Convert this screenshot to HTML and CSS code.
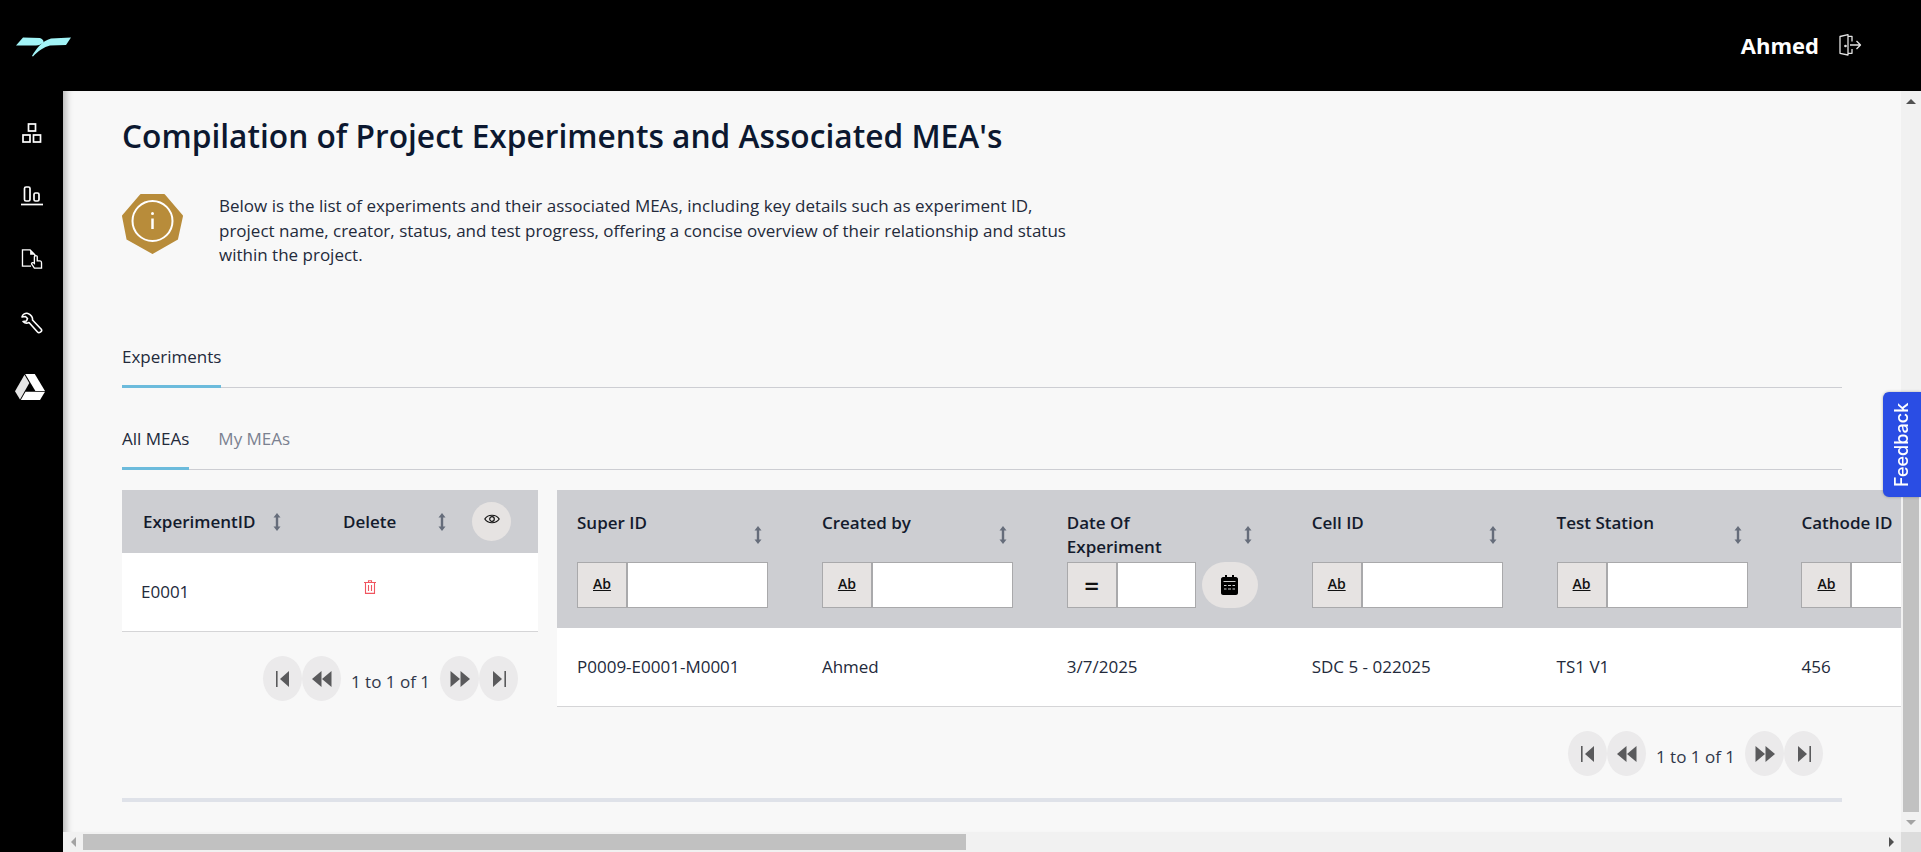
FILE: index.html
```html
<!DOCTYPE html>
<html>
<head>
  <title>Experiments</title>
  <link rel="stylesheet" href="styles.css">
</head>
<body>
<svg class="sprite" width="0" height="0">
  <symbol id="sort" viewBox="0 0 8 18"><path d="M4 0 7.5 4.5H5.2V13.5H7.5L4 18 .5 13.5H2.8V4.5H.5z"/></symbol>
  <symbol id="first" viewBox="0 0 14 16"><path d="M0 0H1.6V16H0zM13 0V16L4 8z"/></symbol>
  <symbol id="prev" viewBox="0 0 20 16"><path d="M9.5 0V16L0 8zM19.5 0V16L10 8z"/></symbol>
  <symbol id="next" viewBox="0 0 20 16"><path d="M.5 0V16L10 8zM10.5 0V16L20 8z"/></symbol>
  <symbol id="last" viewBox="0 0 14 16"><path d="M1 0V16L10 8zM12.4 0H14V16H12.4z"/></symbol>
</svg>

<div class="topbar">
  <svg class="logo" width="58" height="22" viewBox="0 0 58 22">
    <path d="M1 9.500 8 1.500 25 2C28 3 29 5 28.500 7 26 8 24 9.500 21 9.500z"/>
    <path d="M17 20C21 13 27 5 36 2.500L56 1.500 51 9 35 9.500C29 11 23 15 18 20.500z"/>
  </svg>
  <div class="user">
    <span class="username">Ahmed</span>
    <svg width="23" height="22" viewBox="0 0 23 22" fill="none" stroke="#e2e2e2" stroke-width="1.300" stroke-linejoin="round">
      <path d="M1 2.500 9 .7V21L1 19.300z"/>
      <path d="M9 2.300H13V7.500M13 15V19.300H9"/>
      <path d="M11 11H21.500M17.500 7 21.500 11 17.500 15"/>
      <circle cx="6.500" cy="12" r=".7" fill="#e2e2e2"/>
    </svg>
  </div>
</div>

<div class="layout">
  <div class="sidebar">
    <svg class="nav-icon" width="22" height="20" viewBox="0 0 22 20" fill="none" stroke="#fff" stroke-width="1.700">
      <rect x="7.500" y="1" width="7" height="7"/>
      <rect x="2" y="12" width="7" height="7"/>
      <rect x="12.500" y="12" width="7" height="7"/>
    </svg>
    <svg class="nav-icon" width="22" height="20" viewBox="0 0 22 20" fill="none" stroke="#fff" stroke-width="1.700">
      <rect x="3.500" y="1" width="5.500" height="14" rx="1.500"/>
      <rect x="13" y="7" width="5" height="8" rx="1.500"/>
      <path d="M0 18.500H22"/>
    </svg>
    <svg class="nav-icon" width="22" height="20" viewBox="0 0 22 21" fill="none" stroke="#fff" stroke-width="1.400">
      <path d="M10 18H1V1H9L14 6V8"/>
      <path d="M9 1.500V6H13.500z" fill="#fff" stroke="none"/>
      <path d="M13.500 8C13.500 6.500 16.500 6.500 16.500 8V12.500H19.500C20.500 12.500 21 13.500 21 14.500V20H13.500L10.500 15.500C10.500 14 12.500 14 13.500 15z"/>
    </svg>
    <svg class="nav-icon" width="22" height="22" viewBox="0 0 22 22" fill="none" stroke="#fff" stroke-width="1.600" stroke-linejoin="round">
      <path d="M7 1.500C4.500 .5 1.500 2.500 1 5L4.500 4.500 6.500 6.500 5.500 9 2 9.500C3.500 11 6 11.500 8 10.500L16.500 20C18 21.500 21.500 19.500 20.500 17.500L11.500 8C12 5.500 10 2.500 7 1.500z"/>
    </svg>
    <svg class="nav-icon nav-drive" width="30" height="26" viewBox="0 0 30 26" fill="#fff">
      <path d="M10.200 0H19.800L30 17H20.400z"/>
      <path d="M9.500 .8 14.300 9 5 25.500 0 17.200z" fill="#e4e4e4"/>
      <path d="M10.500 17.800H30L25 26H5.800z"/>
    </svg>
  </div>

  <div class="main">
    <div class="viewport">
      <h1 class="title">Compilation of Project Experiments and Associated MEA's</h1>

      <div class="intro">
        <svg class="intro-badge" width="61" height="60" viewBox="0 0 61 60">
          <path d="M19 1H42L60 22 55 45 30.500 59 5.500 45 1 22z" fill="#b88c3a" stroke="#b88c3a" stroke-width="2" stroke-linejoin="round"/>
          <circle cx="30.500" cy="27" r="20" fill="none" stroke="#fff" stroke-width="2"/>
          <circle cx="30.500" cy="19.500" r="1.500" fill="#fff"/>
          <path d="M30.500 24.500V35" stroke="#fff" stroke-width="2.500"/>
        </svg>
        <p class="intro-text">Below is the list of experiments and their associated MEAs, including key details such as experiment ID, project name, creator, status, and test progress, offering a concise overview of their relationship and status within the project.</p>
      </div>

      <div class="tabs tabs-outer">
        <div class="tab active">Experiments</div>
      </div>
      <div class="tabs tabs-inner">
        <div class="tab active">All MEAs</div>
        <div class="tab muted">My MEAs</div>
      </div>

      <div class="tables">
        <div class="left-side">
          <div class="left-table">
            <div class="left-head">
              <div class="left-col1"><b>ExperimentID</b><svg class="sort"><use href="#sort"/></svg></div>
              <div class="left-col2"><b>Delete</b><svg class="sort"><use href="#sort"/></svg></div>
              <div class="eye-btn">
                <svg width="16" height="12" viewBox="0 0 16 12" fill="none" stroke="#111" stroke-width="1.200">
                  <path d="M.8 6C4 1 12 1 15.200 6 12 11 4 11 .8 6z"/>
                  <circle cx="8" cy="6" r="2.300"/>
                </svg>
              </div>
            </div>
            <div class="left-row">
              <div class="left-col1">E0001</div>
              <div class="left-col2">
                <svg class="trash" width="12" height="14" viewBox="0 0 12 14" fill="none" stroke="#f0555f" stroke-width="1.100">
                  <path d="M0 2.500H12M4.500 2.500V.7H7.500V2.500M1.500 2.500V13.400H10.500V2.500M4.500 5V11M7.500 5V11"/>
                </svg>
              </div>
            </div>
          </div>
          <div class="pager">
            <div class="page-btn"><svg width="14" height="16"><use href="#first"/></svg></div>
            <div class="page-btn"><svg width="20" height="16"><use href="#prev"/></svg></div>
            <span class="page-text">1 to 1 of 1</span>
            <div class="page-btn"><svg width="20" height="16"><use href="#next"/></svg></div>
            <div class="page-btn"><svg width="14" height="16"><use href="#last"/></svg></div>
          </div>
        </div>

        <div class="right-side">
          <div class="right-table">
            <div class="right-head">
              <div class="col">
                <div class="col-title"><b>Super ID</b><svg class="sort"><use href="#sort"/></svg></div>
                <div class="filter"><div class="filter-btn ab">Ab</div><div class="filter-input"></div></div>
              </div>
              <div class="col">
                <div class="col-title"><b>Created by</b><svg class="sort"><use href="#sort"/></svg></div>
                <div class="filter"><div class="filter-btn ab">Ab</div><div class="filter-input"></div></div>
              </div>
              <div class="col">
                <div class="col-title"><b>Date Of Experiment</b><svg class="sort"><use href="#sort"/></svg></div>
                <div class="filter-date">
                  <div class="filter filter-short"><div class="filter-btn equals">=</div><div class="filter-input"></div></div>
                  <div class="date-btn">
                    <svg width="17" height="20" viewBox="0 0 17 20">
                      <path d="M4 0H6V2H11V0H13V2H15C16 2 17 3 17 4V18C17 19 16 20 15 20H2C1 20 0 19 0 18V4C0 3 1 2 2 2H4z"/>
                      <path d="M2.500 6.500H14.500M3 10.500H5.500M7 10.500H10M11.500 10.500H14M3 14H5.500M7 14H10M11.500 14H14" stroke="#cfcfcf" stroke-width="1.200"/>
                    </svg>
                  </div>
                </div>
              </div>
              <div class="col">
                <div class="col-title"><b>Cell ID</b><svg class="sort"><use href="#sort"/></svg></div>
                <div class="filter"><div class="filter-btn ab">Ab</div><div class="filter-input"></div></div>
              </div>
              <div class="col">
                <div class="col-title"><b>Test Station</b><svg class="sort"><use href="#sort"/></svg></div>
                <div class="filter"><div class="filter-btn ab">Ab</div><div class="filter-input"></div></div>
              </div>
              <div class="col">
                <div class="col-title"><b>Cathode ID</b><svg class="sort"><use href="#sort"/></svg></div>
                <div class="filter"><div class="filter-btn ab">Ab</div><div class="filter-input"></div></div>
              </div>
            </div>
            <div class="right-row">
              <div class="col">P0009-E0001-M0001</div>
              <div class="col">Ahmed</div>
              <div class="col">3/7/2025</div>
              <div class="col">SDC 5 - 022025</div>
              <div class="col">TS1 V1</div>
              <div class="col">456</div>
            </div>
          </div>
          <div class="pager pager-right">
            <div class="page-btn"><svg width="14" height="16"><use href="#first"/></svg></div>
            <div class="page-btn"><svg width="20" height="16"><use href="#prev"/></svg></div>
            <span class="page-text">1 to 1 of 1</span>
            <div class="page-btn"><svg width="20" height="16"><use href="#next"/></svg></div>
            <div class="page-btn"><svg width="14" height="16"><use href="#last"/></svg></div>
          </div>
        </div>
      </div>

      <div class="end-rule"></div>
    </div>

    <div class="vscroll">
      <div class="arrow arrow-up"></div>
      <div class="v-track"><div class="v-thumb"></div></div>
      <div class="arrow arrow-down"></div>
    </div>
    <div class="hscroll">
      <div class="arrow arrow-left"></div>
      <div class="h-track"><div class="h-thumb"></div></div>
      <div class="arrow arrow-right"></div>
    </div>
    <div class="corner"></div>
  </div>
</div>

<div class="feedback">Feedback</div>
</body>
</html>
```

FILE: styles.css
```css
* {
  box-sizing: border-box;
}

html, body {
  margin: 0;
  height: 100%;
  overflow: hidden;
}

body {
  font-family: "Open Sans", sans-serif;
  font-size: 17px;
  color: #232a3b;
  background: #000;
}

.sprite {
  display: none;
}

/* top bar */
.topbar {
  height: 91px;
  background: #000;
  display: flex;
  align-items: center;
  justify-content: space-between;
  padding: 2px 59px 0 15px;
}

.logo path {
  fill: #a2f4f7;
}

.user {
  display: flex;
  align-items: center;
  gap: 20px;
  margin-top: -4px;
}

.username {
  color: #fff;
  font-size: 22px;
  font-weight: 700;
}

/* sidebar */
.layout {
  display: flex;
  height: 761px;
}

.sidebar {
  width: 63px;
  flex: none;
  background: #000;
  display: flex;
  flex-direction: column;
  align-items: center;
  padding-top: 32px;
  gap: 43px;
}

.nav-icon {
  flex: none;
}

.nav-drive {
  margin: -3px 3px 0 0;
}

/* main area */
.main {
  flex: 1;
  min-width: 0;
  display: grid;
  grid-template-columns: 1fr 20px;
  grid-template-rows: 1fr 20px;
  background: #f8f8f8;
}

.viewport {
  overflow: hidden;
  padding: 24px 59px 0 59px;
  box-shadow: inset 9px 0 7px -6px rgba(0, 0, 0, 0.28);
}

.title {
  margin: 0 0 38px;
  font-size: 31.7px;
  line-height: 41px;
  font-weight: 600;
  color: #0c1830;
}

.intro {
  display: flex;
  gap: 36px;
  height: 152px;
}

.intro-badge {
  flex: none;
}

.intro-text {
  margin: 0;
  width: 860px;
  line-height: 24.5px;
}

/* tabs */
.tabs {
  display: flex;
  border-bottom: 1px solid #cdced3;
  gap: 29px;
}

.tab {
  padding: 0 0 16px;
  line-height: 22px;
  margin-bottom: -1px;
  border-bottom: 3px solid transparent;
}

.tab.active {
  border-bottom-color: #6cbbdc;
}

.tab.muted {
  color: #7b8190;
}

.tabs-outer {
  height: 42px;
}

.tabs-outer .tab {
  padding-bottom: 17px;
}

.tabs-inner {
  margin-top: 40px;
  height: 42px;
}

/* tables */
.tables {
  display: flex;
  gap: 19px;
  margin-top: 20px;
  margin-right: -59px;
}

.left-side {
  width: 416px;
  flex: none;
}

.left-head {
  height: 63px;
  background: #cdced2;
  display: flex;
  align-items: center;
}

.left-head b, .col-title b {
  font-weight: 600;
  color: #141b2d;
}

.left-col1 {
  width: 221px;
  padding-left: 21px;
  padding-right: 62px;
  display: flex;
  justify-content: space-between;
  align-items: center;
}

.left-col2 {
  width: 129px;
  display: flex;
  justify-content: space-between;
  align-items: center;
  padding-right: 26px;
}

.left-row .left-col1 {
  padding: 0 0 2px 19px;
}

.left-row .left-col2 {
  padding: 0 0 10px 21px;
}

.sort {
  width: 8px;
  height: 18px;
  fill: #666d7b;
  flex: none;
}

.eye-btn {
  width: 39px;
  height: 39px;
  border-radius: 50%;
  background: #e6e3e2;
  display: flex;
  align-items: center;
  justify-content: center;
  padding-bottom: 6px;
}

.left-row {
  height: 79px;
  background: #fff;
  border-bottom: 1px solid #d5d5d7;
  display: flex;
  align-items: center;
}

.right-side {
  flex: 1;
  min-width: 0;
}

.right-table {
  overflow: hidden;
}

.right-head {
  height: 138px;
  background: #cdced2;
  display: flex;
  padding-left: 20px;
}

.right-row {
  height: 79px;
  background: #fff;
  border-bottom: 1px solid #d5d5d7;
  display: flex;
  align-items: center;
  padding: 0 0 2px 20px;
}

.col {
  width: 244.9px;
  flex: none;
}

.right-head .col {
  padding-top: 21px;
}

.col-title {
  width: 191px;
  height: 48px;
  margin-bottom: 3px;
  padding-right: 6px;
  display: flex;
  justify-content: space-between;
  align-items: center;
  line-height: 24px;
}

.col-title b {
  align-self: flex-start;
  max-width: 130px;
}

.filter {
  width: 191px;
  height: 46px;
  display: flex;
  border: 1px solid #a9a9ab;
  background: #fff;
}

.filter-btn {
  flex: none;
  background: #e6e3e2;
  border-right: 2px solid #a9a9ab;
  width: 50px;
  display: flex;
  align-items: center;
  justify-content: center;
  color: #111;
}

.ab {
  font-size: 14px;
  font-weight: 600;
  text-decoration: underline;
  padding-bottom: 3px;
}

.equals {
  font-size: 26px;
  font-weight: 600;
}

.filter-input {
  flex: 1;
}

.filter-date {
  display: flex;
  gap: 6px;
}

.filter-short {
  width: 129px;
}

.date-btn {
  width: 56px;
  height: 46px;
  border-radius: 23px;
  background: #e6e3e2;
  display: flex;
  align-items: center;
  justify-content: center;
}

/* paging */
.pager {
  display: flex;
  justify-content: flex-end;
  align-items: center;
  margin-top: 24px;
  padding-right: 20px;
}

.pager-right {
  padding-right: 78px;
}

.page-btn {
  width: 39px;
  height: 45px;
  border-radius: 50%;
  background: #ebeaeb;
  display: flex;
  align-items: center;
  justify-content: center;
}

.page-btn svg {
  fill: #5a5a5c;
}

.page-text {
  width: 99px;
  padding-top: 5px;
  text-align: center;
  color: #30374a;
}

.end-rule {
  height: 4px;
  margin-top: 22px;
  background: #dfe2e9;
}

/* scrollbars */
.vscroll {
  grid-column: 2;
  grid-row: 1;
  background: #f1f1f1;
  display: flex;
  flex-direction: column;
}

.hscroll {
  grid-column: 1;
  grid-row: 2;
  background: #f1f1f1;
  display: flex;
}

.corner {
  background: #dcdcdc;
}

.arrow {
  width: 20px;
  height: 20px;
  flex: none;
  display: flex;
  align-items: center;
  justify-content: center;
}

.arrow::before {
  content: "";
  border: 5px solid transparent;
}

.arrow-up::before {
  border-top: 0;
  border-bottom-color: #505050;
}

.arrow-down::before {
  border-bottom: 0;
  border-top-color: #a3a3a3;
}

.arrow-left::before {
  border-left: 0;
  border-right-color: #a3a3a3;
}

.arrow-right::before {
  border-right: 0;
  border-left-color: #505050;
}

.v-track {
  flex: 1;
  display: flex;
  flex-direction: column;
  justify-content: flex-end;
  padding: 0 2px;
}

.v-thumb {
  height: 350px;
  background: #c1c1c1;
}

.h-track {
  flex: 1;
  padding: 2px 0;
}

.h-thumb {
  width: 883px;
  height: 16px;
  background: #c1c1c1;
}

/* overlay tab on the right edge */
.feedback {
  position: fixed;
  right: 0;
  top: 392px;
  width: 38px;
  height: 105px;
  background: #2a4de4;
  color: #fff;
  font-family: "Inter", sans-serif;
  font-size: 18px;
  font-weight: 500;
  writing-mode: vertical-rl;
  transform: rotate(180deg);
  border-radius: 0 6px 6px 0;
  display: flex;
  align-items: center;
  justify-content: center;
  box-shadow: 0 0 3px rgba(0, 0, 0, 0.3);
}
```
